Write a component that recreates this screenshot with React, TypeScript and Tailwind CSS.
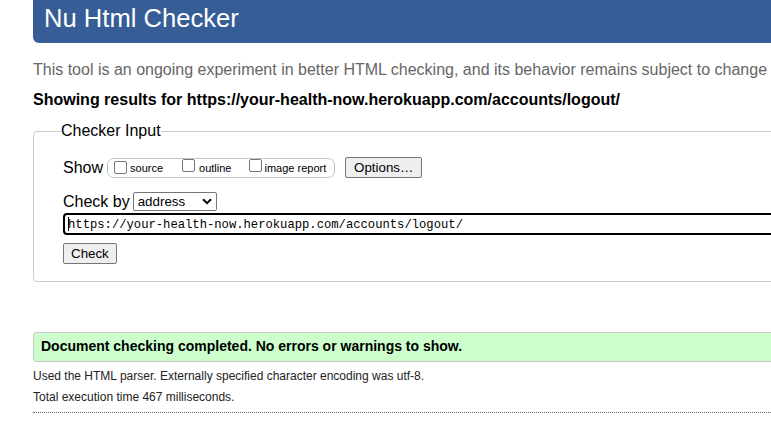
import React from "react";

function Box() {
  return (
    <span className="inline-block w-[13px] h-[13px] border border-[#767676] rounded-[2px] bg-white shrink-0" />
  );
}

export default function App() {
  return (
    <div className="w-[771px] h-[427px] overflow-hidden bg-white font-['Liberation_Sans',Arial,sans-serif] text-black">
      <div className="ml-[33px] w-[900px]">
        <div className="h-[43px] bg-[#365d95] rounded-bl-[6px] pl-[11px] pb-[6px] flex items-center">
          <h1 className="text-white text-[25.6px] leading-none font-normal">Nu Html Checker</h1>
        </div>
        <p className="mt-[18px] text-[16px] leading-[18px] text-[#666]">
          This tool is an ongoing experiment in better HTML checking, and its behavior remains subject to change
        </p>
        <p className="mt-[12px] text-[16px] leading-[18px] font-bold">
          Showing results for https://your-health-now.herokuapp.com/accounts/logout/
        </p>
        <fieldset className="mt-[13px] border border-[#ccc] rounded-[4px] p-0 m-0">
          <legend className="ml-[27px] px-0 text-[16px] leading-[18px]">Checker Input</legend>
          <div className="pl-[29px] pt-[17px] pb-[16px]">
            <div className="flex items-center h-[21px]">
              <span className="text-[16px] leading-[18px]">Show</span>
              <div className="ml-[4px] h-[20px] w-[228px] border border-[#c4c4c4] rounded-[7px] flex items-center pl-[6px] text-[11px]">
                <Box />
                <span className="ml-[3px] mt-[2px]">source</span>
                <span className="ml-[19px]"><Box /></span>
                <span className="ml-[4px] mt-[2px]">outline</span>
                <span className="ml-[18px]"><Box /></span>
                <span className="ml-[2px] mt-[2px]">image report</span>
              </div>
              <button className="ml-[10px] h-[21px] px-[8px] bg-[#efefef] border border-[#767676] rounded-[2px] text-[13.33px] leading-none">
                Options…
              </button>
            </div>
            <div className="mt-[14px] flex items-center h-[19px]">
              <span className="text-[16px] leading-[18px]">Check by</span>
              <div className="ml-[3px] w-[84px] h-[19px] border border-[#767676] rounded-[2px] flex items-center justify-between pl-[4px] pr-[3px] text-[13.33px]">
                <span>address</span>
                <svg width="10" height="7" viewBox="0 0 10 7" className="mr-[1px]">
                  <path d="M1 1.2 L5 5.2 L9 1.2" fill="none" stroke="#000" strokeWidth="2" />
                </svg>
              </div>
            </div>
            <div className="mt-[2px] h-[22px] border-2 border-black rounded-[4px] flex items-center pl-[3px] pt-[3px] font-['Liberation_Mono',monospace] text-[12.2px]">
              <span className="w-px h-[14px] bg-black mr-[-1px] -mt-[3px]" />
              https://your-health-now.herokuapp.com/accounts/logout/
            </div>
            <button className="mt-[8px] h-[21px] px-[7px] bg-[#efefef] border border-[#767676] rounded-[2px] text-[13.33px] leading-none">
              Check
            </button>
          </div>
        </fieldset>
        <div className="mt-[50px] h-[30px] bg-[#ccffcc] border border-[#c8c8c8] rounded-l-[3px] flex items-center pl-[7px]">
          <span className="font-bold text-[14px]">Document checking completed. No errors or warnings to show.</span>
        </div>
        <p className="mt-[7px] text-[12px] leading-[14px] text-[#222]">
          Used the HTML parser. Externally specified character encoding was utf-8.
        </p>
        <p className="mt-[7px] text-[12px] leading-[14px] text-[#222]">Total execution time 467 milliseconds.</p>
        <div className="mt-[8px] border-t border-dotted border-[#666]" />
      </div>
    </div>
  );
}
